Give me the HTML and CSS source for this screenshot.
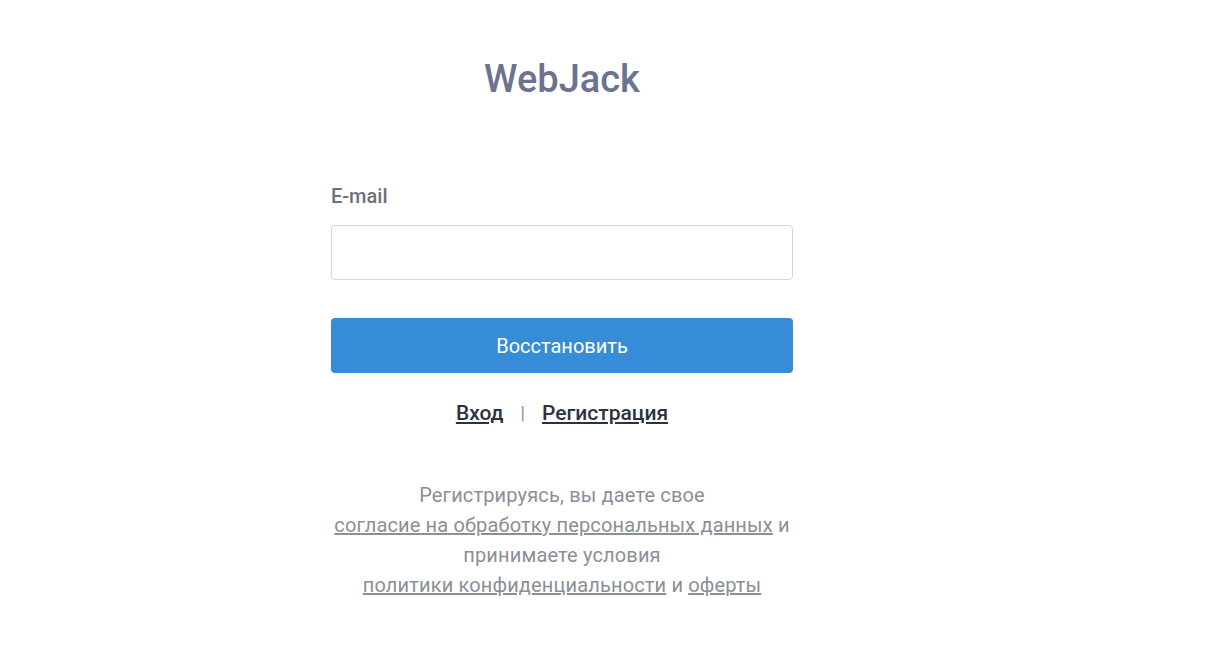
FILE: index.html
```html
<!DOCTYPE html>
<html lang="ru">
<head>
<meta charset="utf-8">
<title>WebJack</title>
<link rel="stylesheet" href="styles.css">
</head>
<body>
<main class="page">
  <h1 class="logo">WebJack</h1>
  <form class="form">
    <label class="label" for="email">E-mail</label>
    <input class="input" id="email" type="email">
    <button class="btn" type="button">Восстановить</button>
  </form>
  <nav class="links">
    <a href="#" class="link">Вход</a>
    <span class="sep">|</span>
    <a href="#" class="link">Регистрация</a>
  </nav>
  <p class="terms">Регистрируясь, вы даете свое<br><a href="#">согласие на обработку персональных данных</a> и<br>принимаете условия<br><a href="#">политики конфиденциальности</a> и <a href="#">оферты</a></p>
</main>
</body>
</html>
```
FILE: styles.css
```css
* { box-sizing: border-box; }
html, body { margin: 0; padding: 0; background: #fff; }
body { font-family: Roboto, "Noto Sans", sans-serif; }
.page {
  width: 462px;
  margin-left: 331px;
  padding-top: 57px;
  display: flex;
  flex-direction: column;
}
.logo {
  margin: 0;
  text-align: center;
  font-size: 38px;
  font-weight: 500;
  line-height: 44px;
  color: #6b7390;
}
.form {
  margin-top: 83px;
  display: flex;
  flex-direction: column;
}
.label {
  font-size: 20px;
  font-weight: 500;
  line-height: 24px;
  color: #6d7078;
}
.input {
  margin-top: 17px;
  height: 55px;
  border: 1px solid #d3d6dc;
  border-radius: 4px;
  font: inherit;
  font-size: 18px;
  padding: 0 16px;
}
.btn {
  margin-top: 38px;
  height: 55px;
  border: none;
  border-radius: 4px;
  background: #368cd6;
  color: #fff;
  font-family: Roboto, sans-serif;
  font-size: 20px;
  font-weight: 400;
}
.links {
  margin-top: 26px;
  display: flex;
  justify-content: center;
  align-items: center;
  gap: 17px;
  font-size: 21px;
  line-height: 28px;
}
.link {
  color: #2b3340;
  font-weight: 500;
  text-decoration: underline;
}
.sep {
  color: #8a90a0;
  font-size: 18px;
}
.terms {
  margin: 53px 0 0;
  text-align: center;
  font-size: 20px;
  letter-spacing: 0.15px;
  line-height: 30px;
  color: #8a9097;
}
.terms a { color: #8a9097; text-decoration: underline; }
```
